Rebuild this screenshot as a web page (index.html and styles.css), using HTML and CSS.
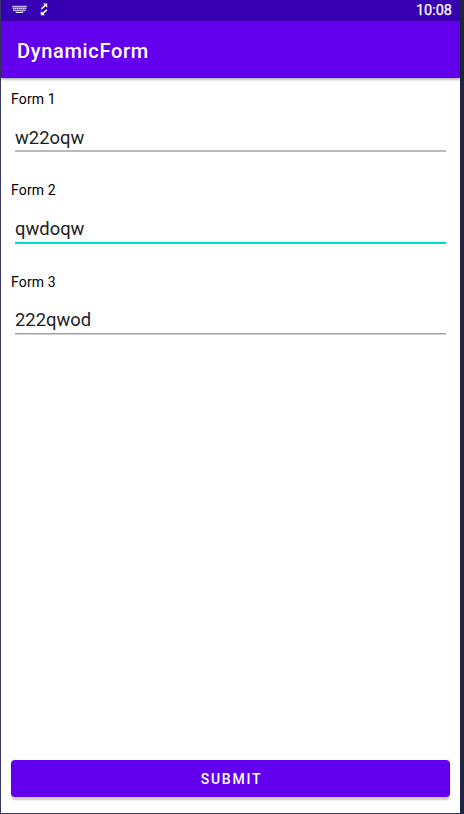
FILE: index.html
```html
<!DOCTYPE html>
<html lang="en">
<head>
<meta charset="utf-8">
<title>DynamicForm</title>
<link rel="stylesheet" href="styles.css">
</head>
<body>
<div class="screen">
  <div class="status">
    <svg class="keyboard" width="15" height="9" viewBox="0 0 15 9"><path d="M.2 .5H14.8V2.2H.2ZM.5 2.3H14.5V4.2H.5ZM1 4.5H14V6.3H1ZM3.5 6.6H11.5V8H3.5Z" fill="#8261cd"/><path d="M.5 1.5H15M1 3.5H14M1.5 5.5H13.5" stroke="#eee8fa" stroke-width="1" stroke-dasharray="1.2 .8"/><path d="M4 7.5H11" stroke="#eee8fa" stroke-width="1"/></svg>
    <svg class="sync" width="8" height="13" viewBox="0 0 8 13"><path d="M3 .5H7.2V4.7ZM.8 8.1V12.3H5Z" fill="#fff"/><path d="M6 1.7L1.4 5.9M6.8 6.9L2 11.1" stroke="#fff" stroke-width="1.5"/></svg>
    <span class="clock">10:08</span>
  </div>
  <header class="bar"><h1>DynamicForm</h1></header>
  <form class="form">
    <div class="field"><label for="f1">Form 1</label><input id="f1" value="w22oqw"></div>
    <div class="field active"><label for="f2">Form 2</label><input id="f2" value="qwdoqw"></div>
    <div class="field last"><label for="f3">Form 3</label><input id="f3" value="222qwod"></div>
    <button class="submit" type="button">SUBMIT</button>
  </form>
</div>
</body>
</html>
```
FILE: styles.css
```css
* { box-sizing: border-box; }
body { margin: 0; background: #1f2442; font-family: Roboto, sans-serif; }
.screen { height: 814px; margin-right: 4px; border-left: 1px solid #3a3963; border-bottom: 1px solid #3a3963; background: #fff; display: flex; flex-direction: column; }
.status { height: 21px; background: #3700b3; display: flex; align-items: center; padding: 0 8px 2px 11px; color: #fff; }
.sync { margin-left: 13px; }
.clock { margin-left: auto; padding-top: 2px; font-size: 14.5px; line-height: 19px; -webkit-text-stroke: .25px #fff; }
.bar { height: 57px; background: #6200ee; display: flex; align-items: center; padding: 2px 0 0 16px; box-shadow: 0 1px 3px rgba(0,0,0,.45); }
h1 { margin: 0; color: #fff; font-size: 20px; font-weight: 500; letter-spacing: .68px; }
.form { flex: 1; display: flex; flex-direction: column; padding: 12px 10px 16px; }
.field { height: 91px; display: flex; flex-direction: column; }
.last { height: 92px; padding-top: 1px; }
label { font-size: 14px; line-height: 18px; letter-spacing: .15px; color: #000; }
input { margin: 14px 4px 0; height: 30px; padding: 2px 0 0; border: 0; border-bottom: 2px solid #b9b9b9; outline: 0; font: 18.4px Roboto, sans-serif; color: #212121; background: none; border-radius: 0; }
.active input { height: 31px; padding-top: 1px; border-bottom: 2px solid #03dac5; box-shadow: inset 0 -1px #d5f7f3; }
.last input { height: 29px; padding-top: 1px; border-bottom: 1px solid #a0a0a0; box-shadow: 0 1px #d0d0d0; }
.submit { margin-top: auto; height: 37px; padding: 1px 0 0 2px; border: 0; border-radius: 4px; background: #6200ee; color: #fff; font: 500 14px Roboto, sans-serif; letter-spacing: 1.75px; box-shadow: 0 3px 2px rgba(0,0,0,.2); }
```
